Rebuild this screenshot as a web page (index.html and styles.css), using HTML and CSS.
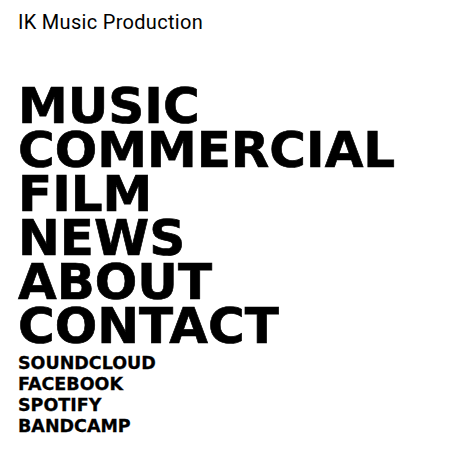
FILE: index.html
```html
<!DOCTYPE html>
<html>
<head>
<meta charset="utf-8">
<link rel="stylesheet" href="styles.css">
</head>
<body>
<header class="site-header">
  <a class="site-title" href="#">IK Music Production</a>
</header>
<nav class="main-nav">
  <a href="#">MUSIC</a>
  <a href="#">COMMERCIAL</a>
  <a href="#">FILM</a>
  <a href="#">NEWS</a>
  <a href="#">ABOUT</a>
  <a href="#">CONTACT</a>
</nav>
<nav class="social-nav">
  <a href="#">SOUNDCLOUD</a>
  <a href="#">FACEBOOK</a>
  <a href="#">SPOTIFY</a>
  <a href="#">BANDCAMP</a>
</nav>
</body>
</html>
```
FILE: styles.css
```css
html, body {
  margin: 0;
  padding: 0;
  background: #fff;
}
body {
  padding: 10px 18px;
  font-family: "DejaVu Sans", "Liberation Sans", sans-serif;
  color: #000;
}
a {
  color: #000;
  text-decoration: none;
}
.site-header {
  height: 74px;
}
.site-title {
  font-family: "Roboto", "Liberation Sans", sans-serif;
  font-size: 20px;
  line-height: 24px;
  font-weight: 400;
  letter-spacing: 0.3px;
}
.main-nav {
  display: flex;
  flex-direction: column;
  align-items: flex-start;
}
.main-nav a {
  font-size: 50px;
  line-height: 44px;
  font-weight: 700;
  -webkit-text-stroke: 0.7px #000;
}
.social-nav {
  display: flex;
  flex-direction: column;
  align-items: flex-start;
  margin-top: 5px;
}
.social-nav a {
  font-size: 17.5px;
  line-height: 21px;
  font-weight: 700;
  -webkit-text-stroke: 0.3px #000;
}
```
